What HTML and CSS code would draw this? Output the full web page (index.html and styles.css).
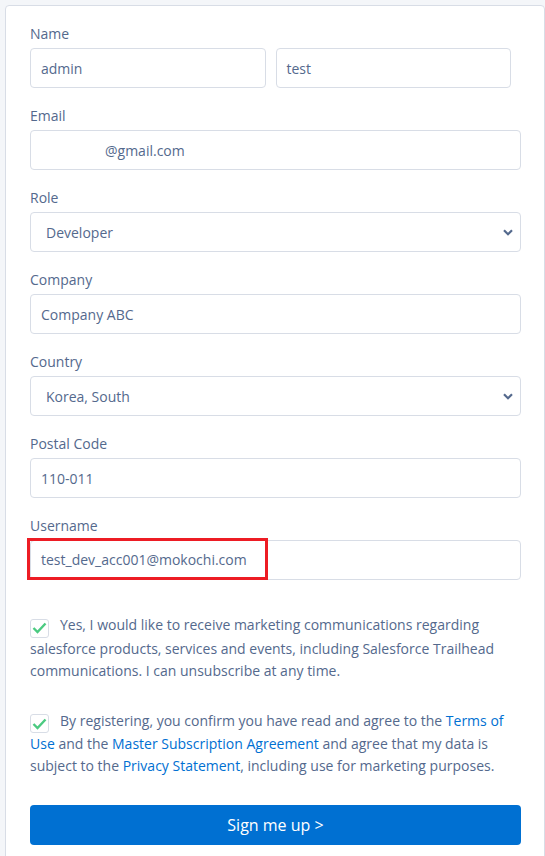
FILE: index.html
```html
<!DOCTYPE html>
<html>
<head>
<meta charset="utf-8">
<link rel="stylesheet" href="styles.css">
</head>
<body>
<div class="card">
  <div class="field">
    <div class="label">Name</div>
    <div class="row">
      <div class="input half">admin</div>
      <div class="input half">test</div>
    </div>
  </div>
  <div class="field">
    <div class="label">Email</div>
    <div class="input"><span class="blank"></span>@gmail.com</div>
  </div>
  <div class="field">
    <div class="label">Role</div>
    <div class="input select"><span>Developer</span>
      <svg class="chev" width="10" height="7" viewBox="0 0 10 7"><path d="M1 1.2 L5 5.2 L9 1.2" fill="none" stroke="#54698d" stroke-width="2.2"/></svg>
    </div>
  </div>
  <div class="field">
    <div class="label">Company</div>
    <div class="input">Company ABC</div>
  </div>
  <div class="field">
    <div class="label">Country</div>
    <div class="input select"><span>Korea, South</span>
      <svg class="chev" width="10" height="7" viewBox="0 0 10 7"><path d="M1 1.2 L5 5.2 L9 1.2" fill="none" stroke="#54698d" stroke-width="2.2"/></svg>
    </div>
  </div>
  <div class="field">
    <div class="label">Postal Code</div>
    <div class="input">110-011</div>
  </div>
  <div class="field">
    <div class="label">Username</div>
    <div class="input user">
      <span class="hl">test_dev_acc001@mokochi.com</span>
    </div>
  </div>
  <div class="check">
    <span class="box"><svg width="15" height="12" viewBox="0 0 15 12"><path d="M1.5 6 L5.5 10 L13.5 1.5" fill="none" stroke="#4bca81" stroke-width="2.4"/></svg></span>Yes, I would like to receive marketing communications regarding salesforce products, services and events, including Salesforce Trailhead communications. I can unsubscribe at any time.
  </div>
  <div class="check">
    <span class="box"><svg width="15" height="12" viewBox="0 0 15 12"><path d="M1.5 6 L5.5 10 L13.5 1.5" fill="none" stroke="#4bca81" stroke-width="2.4"/></svg></span>By registering, you confirm you have read and agree to the <a>Terms of Use</a> and the <a>Master Subscription Agreement</a> and agree that my data is subject to the <a>Privacy Statement</a>, including use for marketing purposes.
  </div>
  <div class="btn">Sign me up &gt;</div>
</div>
</body>
</html>
```
FILE: styles.css
```css
html, body { margin: 0; padding: 0; }
body {
  background: #f4f6f9;
  font-family: "Open Sans", "Liberation Sans", sans-serif;
  font-size: 14px;
  color: #54698d;
  overflow: hidden;
  padding: 5px 0 0 5px;
}
.card {
  background: #fff;
  border: 1px solid #d8dde6;
  border-radius: 4px;
  width: 540px;
  padding: 18px 0 40px 24px;
  box-sizing: border-box;
}
.field { width: 491px; margin-bottom: 18px; }
.label { line-height: 20px; height: 20px; margin-bottom: 4px; color: #54698d; }
.row { display: flex; gap: 10px; width: 481px; }
.input {
  height: 40px;
  box-sizing: border-box;
  border: 1px solid #d8dde6;
  border-radius: 4px;
  padding: 0 10px;
  display: flex;
  align-items: center;
  color: #54698d;
}
.half { flex: 1; }
.blank { display: inline-block; width: 64px; }
.select { padding-left: 15px; justify-content: space-between; padding-right: 7px; }
.user { position: relative; }
.hl {
  position: absolute;
  left: -4px; top: -3px;
  width: 241px; height: 42px;
  box-sizing: border-box;
  border: 3px solid #ed1c24;
  padding-left: 11px;
  display: flex;
  align-items: center;
}
.check {
  width: 491px;
  line-height: 22px;
  margin-top: 34px;
}
.check + .check { margin-top: 28px; }
.box {
  display: inline-flex;
  align-items: center;
  justify-content: center;
  width: 19px; height: 19px;
  box-sizing: border-box;
  border: 1px solid #d8dde6;
  border-radius: 3px;
  vertical-align: -4px;
  margin-right: 11px;
}
.check a { color: #0070d2; }
.btn {
  margin-top: 28px;
  width: 491px;
  height: 40px;
  background: #0070d2;
  border-radius: 4px;
  color: #fff;
  font-size: 16px;
  display: flex;
  align-items: center;
  justify-content: center;
}
```
